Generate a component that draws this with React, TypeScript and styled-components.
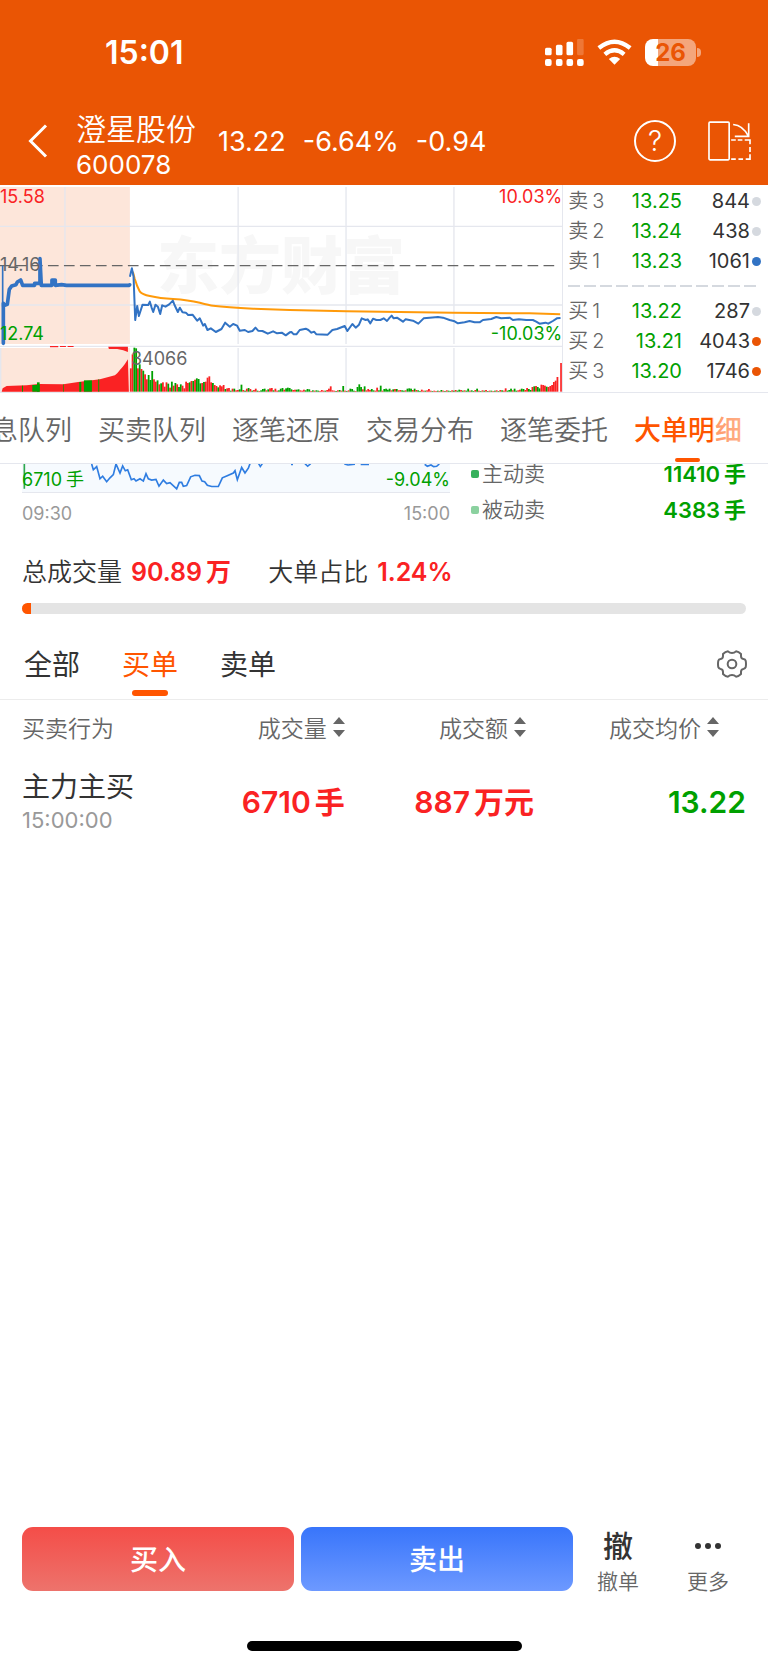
import React from "react";
import styled, { createGlobalStyle } from "styled-components";

const color = {
  brand: "#ea5504",
  accent: "#ff5500",
  up: "#fa2223",
  down: "#00a000",
  ink: "#333333",
  sub: "#666666",
  mute: "#999999",
  line: "#e5e7ee",
};

const GlobalStyle = createGlobalStyle`
  * { box-sizing: border-box; }
  body {
    margin: 0;
    background: #fff;
    color: ${color.ink};
    font-family: Inter, "Noto Sans CJK SC", sans-serif;
  }
  button {
    margin: 0;
    padding: 0;
    border: 0;
    background: none;
    color: inherit;
    font: inherit;
  }
  svg { display: block; }
  table { border-collapse: collapse; border-spacing: 0; }
  th, td { padding: 0; font-weight: 400; }
`;

const Page = styled.div`
  display: flex;
  flex-direction: column;
  min-height: 100vh;
  overflow: hidden;
`;

const Unit = styled.span`
  margin-left: 4px;
`;

/* ---------- header ---------- */

const Header = styled.header`
  background: ${color.brand};
  color: #fff;
  padding-bottom: 3px;
`;

const StatusBar = styled.div`
  display: flex;
  align-items: center;
  justify-content: space-between;
  height: 100px;
  padding: 4px 67px 0 105px;
`;

const Clock = styled.span`
  font-size: 32px;
  font-weight: 600;
`;

const StatusIcons = styled.div`
  display: flex;
  align-items: center;
  gap: 13px;
`;

const BatteryGroup = styled.div`
  display: flex;
  align-items: center;
  gap: 1px;
`;

const Battery = styled.span`
  width: 51px;
  height: 27px;
  border-radius: 8px;
  background: linear-gradient(90deg, #fff 13px, rgba(255, 255, 255, 0.48) 13px);
  color: ${color.brand};
  font-size: 24px;
  font-weight: 700;
  line-height: 27px;
  text-align: center;
`;

const BatteryTip = styled.span`
  width: 4px;
  height: 9px;
  border-radius: 0 4px 4px 0;
  background: rgba(255, 255, 255, 0.48);
`;

const NavBar = styled.div`
  display: flex;
  align-items: center;
  height: 82px;
  padding: 0 17px 0 28px;
`;

const BackButton = styled.button`
  width: 48px;
`;

const StockTitle = styled.div`
  padding-top: 12px;
`;

const StockName = styled.h1`
  margin: 0;
  font-size: 30px;
  font-weight: 350;
  line-height: 36px;
`;

const StockCode = styled.div`
  font-size: 26px;
  line-height: 36px;
`;

const Quote = styled.div`
  display: flex;
  flex: 1;
  gap: 17px;
  padding: 2px 0 0 22px;
  font-size: 27px;
  line-height: 36px;
`;

const HelpButton = styled.button`
  width: 42px;
  height: 42px;
  margin-right: 32px;
  border: 2px solid #fff;
  border-radius: 50%;
  font-size: 28px;
  font-weight: 300;
  line-height: 38px;
`;

/* ---------- minute chart and order book ---------- */

const Market = styled.section`
  display: grid;
  grid-template-columns: 11fr 4fr;
  border-bottom: 1px solid ${color.line};
`;

const ChartPane = styled.div`
  position: relative;
  height: 207px;
  border-right: 1px solid ${color.line};
  svg { width: 100%; height: 100%; position: relative; }
`;

const Watermark = styled.span`
  position: absolute;
  left: 0;
  right: 0;
  top: 37px;
  text-align: center;
  font-size: 62px;
  font-weight: 900;
  line-height: 90px;
  color: #f7f7f7;
`;

const ChartLabel = styled.span<{ $top: number; $left?: number; $right?: number; $tone: string }>`
  position: absolute;
  top: ${(p) => p.$top}px;
  ${(p) => (p.$right !== undefined ? `right: ${p.$right}px;` : `left: ${p.$left ?? 0}px;`)}
  font-size: 18px;
  line-height: 24px;
  color: ${(p) => p.$tone};
`;

const Book = styled.div`
  padding: 1px 7px 0 5px;
`;

const BookTable = styled.table`
  width: 100%;
  font-size: 20px;
  line-height: 30px;
  td, th { height: 30px; text-align: right; }
`;

const BookSide = styled.th`
  && { text-align: left; }
  font-weight: 350;
  color: ${color.sub};
`;

const BookPrice = styled.td`
  width: 60px;
  color: ${color.down};
`;

const BookVolume = styled.td`
  width: 68px;
`;

const BookDotCell = styled.td`
  width: 11px;
`;

const Dot = styled.i<{ $tone: string }>`
  display: block;
  width: 9px;
  height: 9px;
  margin-left: auto;
  border-radius: 50%;
  background: ${(p) => p.$tone};
`;

const Spread = styled.div`
  display: flex;
  align-items: center;
  height: 20px;
  padding-right: 4px;
  &::before {
    content: "";
    flex: 1;
    height: 2px;
    background: repeating-linear-gradient(90deg, #d5d9df 0 12px, transparent 12px 16px);
  }
`;

/* ---------- section tabs ---------- */

const SectionTabs = styled.nav`
  position: relative;
  display: flex;
  justify-content: flex-end;
  gap: 26px;
  height: 71px;
  padding-right: 26px;
  overflow: hidden;
  border-bottom: 1px solid ${color.line};
  &::after {
    content: "";
    position: absolute;
    inset: 0 0 0 auto;
    width: 56px;
    background: linear-gradient(90deg, rgba(255, 255, 255, 0.4), rgba(255, 255, 255, 0.65));
  }
`;

const SectionTab = styled.button<{ $active?: boolean }>`
  position: relative;
  flex: none;
  font-size: 27px;
  font-weight: ${(p) => (p.$active ? 500 : 350)};
  color: ${(p) => (p.$active ? color.accent : color.sub)};
  &::after {
    content: "";
    display: ${(p) => (p.$active ? "block" : "none")};
    position: absolute;
    left: 50%;
    bottom: 1px;
    width: 25px;
    height: 4px;
    margin-left: -13px;
    border-radius: 2px;
    background: ${color.accent};
  }
`;

/* ---------- big-order summary ---------- */

const Summary = styled.section`
  display: grid;
  grid-template-columns: 428fr 296fr;
  padding: 0 22px;
  overflow: hidden;
`;

const FlowChart = styled.div`
  position: relative;
  height: 29px;
  border-bottom: 1px solid ${color.line};
  background: #f6fafe;
  svg { width: 100%; height: 28px; }
`;

const TimeAxis = styled.div`
  display: flex;
  justify-content: space-between;
  font-size: 18px;
  line-height: 42px;
  color: ${color.mute};
`;

const Legend = styled.ul`
  margin: -8px 0 0;
  padding: 0 0 0 21px;
  list-style: none;
`;

const LegendRow = styled.li`
  display: flex;
  align-items: center;
  height: 36px;
  font-size: 21px;
  font-weight: 350;
  line-height: 30px;
  color: ${color.sub};
`;

const LegendMark = styled.i<{ $tone: string }>`
  width: 8px;
  height: 8px;
  margin-right: 3px;
  border-radius: 2px;
  background: ${(p) => p.$tone};
`;

const LegendValue = styled.strong`
  margin-left: auto;
  font-size: 22px;
  font-weight: 600;
  color: ${color.down};
`;

const Totals = styled.div`
  display: flex;
  gap: 37px;
  margin-top: 19px;
  padding: 0 22px;
  font-size: 25px;
  font-weight: 350;
  line-height: 36px;
`;

const Total = styled.span`
  display: flex;
  gap: 9px;
`;

const TotalValue = styled.strong`
  font-weight: 600;
  color: ${color.up};
`;

const Ratio = styled.div`
  height: 11px;
  margin: 13px 22px 15px;
  border-radius: 6px;
  overflow: hidden;
  background: #e4e4e4;
`;

const RatioFill = styled.div`
  width: 9px;
  height: 100%;
  background: ${color.accent};
`;

/* ---------- order list ---------- */

const Filters = styled.div`
  display: flex;
  align-items: stretch;
  gap: 42px;
  height: 71px;
  padding: 0 21px 0 24px;
  border-bottom: 1px solid #ececec;
`;

const Filter = styled.button<{ $active?: boolean }>`
  position: relative;
  padding-bottom: 3px;
  font-size: 28px;
  color: ${(p) => (p.$active ? color.accent : color.ink)};
  &::after {
    content: "";
    display: ${(p) => (p.$active ? "block" : "none")};
    position: absolute;
    left: 10px;
    right: 10px;
    bottom: 3px;
    height: 6px;
    border-radius: 3px;
    background: ${color.accent};
  }
`;

const SettingsButton = styled.button`
  margin-left: auto;
`;

const Orders = styled.table`
  width: calc(100% - 44px);
  margin: 0 22px;
  table-layout: fixed;
`;

const HeadCell = styled.th<{ $width: string; $inset?: number }>`
  width: ${(p) => p.$width};
  height: 57px;
  padding: 0 ${(p) => p.$inset ?? 0}px 4px 0;
  font-size: 23px;
  font-weight: 350;
  text-align: right;
  color: ${color.sub};
  &:first-child { text-align: left; }
`;

const SortButton = styled.button`
  display: inline-flex;
  align-items: center;
  gap: 6px;
  vertical-align: middle;
`;

const ActionCell = styled.td`
  height: 90px;
  white-space: nowrap;
`;

const Action = styled.div`
  font-size: 28px;
  line-height: 36px;
`;

const Time = styled.div`
  font-size: 22px;
  line-height: 30px;
  color: ${color.mute};
`;

const ValueCell = styled.td<{ $tone: string; $inset?: number }>`
  padding-right: ${(p) => p.$inset ?? 0}px;
  font-size: 30px;
  font-weight: 600;
  line-height: 36px;
  text-align: right;
  white-space: nowrap;
  color: ${(p) => p.$tone};
`;

/* ---------- bottom bar ---------- */

const Footer = styled.footer`
  margin-top: auto;
`;

const TradeBar = styled.div`
  display: flex;
  align-items: flex-start;
  padding: 0 15px 0 22px;
`;

const TradeButton = styled.button<{ $from: string; $to: string }>`
  flex: 1;
  height: 64px;
  padding-bottom: 2px;
  border-radius: 11px;
  background: linear-gradient(${(p) => p.$from}, ${(p) => p.$to});
  color: #fff;
  font-size: 28px;
  font-weight: 500;
  & + & { margin-left: 7px; }
`;

const ToolButton = styled.button`
  display: flex;
  flex-direction: column;
  align-items: center;
  width: 90px;
  font-size: 21px;
  font-weight: 350;
  line-height: 34px;
  color: ${color.sub};
`;

const ToolGlyph = styled.span`
  display: flex;
  align-items: center;
  height: 38px;
  font-size: 30px;
  font-weight: 500;
  color: ${color.ink};
`;

const HomeIndicator = styled.div`
  width: 275px;
  height: 10px;
  margin: 42px auto 14px;
  border-radius: 5px;
  background: #000;
`;

/* ---------- data ---------- */

const auctionLine =
  "10,490 10,370 14,376 22,373 28,328 35,318 48,314 52,306 62,300 68,316 104,316 104,310 120,310 120,236 124,316 156,316 156,300 166,300 166,316 185,314 200,316 388,316";

const priceLine =
  "390,290 396,265 401,290 406,420 412,378 417,408 428,374 445,375 450,365 455,382 460,396 467,374 474,380 481,402 487,376 497,380 508,373 519,362 524,375 534,396 540,383 548,397 558,398 565,405 578,404 592,422 600,415 610,437 615,432 623,450 633,445 648,456 665,447 676,428 690,440 700,432 712,437 720,452 735,450 745,456 758,453 767,443 775,452 788,453 804,461 820,454 832,460 846,458 858,466 870,457 875,456 882,463 890,463 900,450 918,446 926,450 935,458 943,455 950,463 984,464 998,450 1012,447 1035,438 1043,453 1058,432 1068,443 1078,434 1086,415 1098,420 1104,418 1112,430 1120,416 1130,420 1142,420 1152,415 1162,423 1170,413 1176,407 1182,415 1192,413 1210,425 1218,418 1240,422 1256,431 1272,415 1290,413 1315,411 1330,413 1350,420 1365,424 1375,430 1395,427 1410,423 1425,427 1440,427 1450,420 1475,417 1490,411 1505,415 1530,413 1540,420 1558,418 1580,420 1600,420 1610,425 1620,431 1638,428 1646,431 1660,423 1672,415 1683,414";

const averageLine =
  "M399 275L404 295L412 318L420 335Q427 344 450 348Q480 355 520 357Q565 360 600 368Q630 376 640 377Q680 381 760 386L870 390L1040 394L1360 398L1590 400L1682 403";

const auctionVolume =
  "5,635 8,625 20,618 80,616 115,612 190,613 235,606 300,598 345,586 352,580 360,570 368,561 375,552 384,538 387,635";

const auctionSell: Array<[number, number, number]> = [
  [66, 3, 18], [97, 22, 20], [111, 8, 28], [190, 2, 22], [238, 6, 29], [252, 24, 34], [295, 3, 37],
];

/* one entry per minute: r = rise, g = fall, followed by the bar height */
const volumes = (
  "r70 r112 g132 g130 r70 g82 r68 g63 r52 r37 g50 g35 g62 r37 r30 g34 r22 g25 r28 r15 r28 g24 r12 g30 r18 g26 r22 g14 g22 r18 r10 r30 r26 g28 r32 g32 r36 g40 g38 g25 r26 g29 r30 r42 r46 r28 g26 r20 r17 g13 r19 r16 r20 g8 r10 r11 g3 r9 g9 r4 r5 g7 g21 r5 g3 r9 g11 r8 g3 r5 r9 g3 r2 g4 g8 g9 r4 g7 r10 r11 g4 r9 r3 g4 g9 g11 r6 " +
  "g10 g12 g11 g7 r5 r6 g6 g7 r4 r3 r6 g4 g8 g7 r2 g4 r3 g4 g3 r2 r5 r3 g3 r5 r9 r16 r4 r3 g2 r4 g5 r3 g17 r3 g2 r4 g9 g8 g3 r2 g14 g22 g14 r7 g16 r4 r8 r5 g8 g4 r3 r12 g4 g18 r3 g8 g9 g6 g9 r4 g7 r8 g8 r4 r5 g4 g3 r4 g9 g10 g9 r5 g9 r5 g4 g2 r6 r3 g3 r4 r8 r3 g2 r3 " +
  "r2 g3 r2 g5 r3 g2 r4 g3 g2 r4 g3 r5 g3 g6 r5 g3 r4 g3 g9 r3 g4 g2 r5 g9 r3 g2 r4 g3 r5 g2 r3 g3 r2 g3 r4 g2 r5 g4 r3 r10 g3 g5 g9 r4 g9 g3 r4 r6 g9 g8 r5 r11 g8 g5 r14 g16 r17 g14 g10 r21 r20 r18 g15 r14 r17 r20 r29 r33 r44"
).split(" ");

const flowLine =
  "275,207 280,225 290,215 300,253 308,245 320,262 330,250 340,240 348,207 360,235 368,213 376,228 383,225 394,256 402,253 408,260 420,253 430,260 438,237 445,253 455,257 468,255 477,276 490,257 500,268 510,265 530,284 538,264 545,264 550,276 560,274 572,247 585,242 598,243 606,260 614,262 622,273 635,277 655,277 667,250 680,244 700,235 705,228 712,256 725,218 735,235 745,220 750,206";

const gray = "#d5d9df";
const asks = [
  { side: "卖", level: 3, price: "13.25", volume: 844, dot: gray },
  { side: "卖", level: 2, price: "13.24", volume: 438, dot: gray },
  { side: "卖", level: 1, price: "13.23", volume: 1061, dot: "#3273c4" },
];
const bids = [
  { side: "买", level: 1, price: "13.22", volume: 287, dot: gray },
  { side: "买", level: 2, price: "13.21", volume: 4043, dot: color.brand },
  { side: "买", level: 3, price: "13.20", volume: 1746, dot: color.brand },
];

const sections = ["信息队列", "买卖队列", "逐笔还原", "交易分布", "逐笔委托", "大单明细"];

/* ---------- drawings ---------- */

const SignalIcon = () => (
  <svg width="39" height="27" viewBox="483 114 118 81" fill="#fff" aria-hidden="true">
    {[483, 516, 548, 580].map((x, i) => (
      <React.Fragment key={x}>
        <rect x={x} y="174" width="20" height="21" rx="6" />
        <rect x={x} y={140 - i * 9} width="20" height={23 + i * 9} rx="5" opacity={i === 3 ? 0.2 : 1} />
      </React.Fragment>
    ))}
  </svg>
);

const WifiIcon = () => (
  <svg width="35" height="26" viewBox="640 115 104 78" fill="none" stroke="#fff" strokeWidth="13" aria-hidden="true">
    <path d="M645 142Q692 104 739 142" />
    <path d="M663 161Q692 137 721 161" />
    <path d="M692 192L675 175Q692 162 709 175Z" fill="#fff" stroke="none" />
  </svg>
);

const BackIcon = () => (
  <svg width="20" height="34" viewBox="0 0 20 34" fill="none" stroke="#fff" strokeWidth="3" aria-hidden="true">
    <path d="M18 1.500L2.500 17L18 32.500" />
  </svg>
);

const RotateIcon = () => (
  <svg width="43" height="40" viewBox="972 363 130 120" fill="none" stroke="#fff" strokeWidth="5" aria-hidden="true">
    <rect x="975" y="366" width="61" height="114" rx="3" />
    <path d="M1048 373Q1078 376 1093 407M1095 369V409H1053" />
    <path d="M1042 420H1056M1062 420H1076M1083 420H1099V433M1099 441V456M1099 463V478H1086M1078 478H1064M1056 478H1042" />
  </svg>
);

const GearIcon = () => (
  <svg width="30" height="28" viewBox="0 0 90 84" fill="none" stroke="#666" strokeWidth="6" strokeLinejoin="round" aria-hidden="true">
    <path d="M33 4Q38 9 45 9Q52 9 57 4Q65 5 72 12V18Q72 26 79 27Q85 28 86 32Q88 42 86 52Q85 56 79 57Q72 58 72 66V72Q65 79 57 80Q52 75 45 75Q38 75 33 80Q25 79 18 72V66Q18 58 11 57Q5 56 4 52Q2 42 4 32Q5 28 11 27Q18 26 18 18V12Q25 5 33 4Z" />
    <circle cx="45" cy="42" r="13" />
  </svg>
);

const SortIcon = () => (
  <svg width="12" height="20" viewBox="0 0 12 20" fill="#666" aria-hidden="true">
    <path d="M6 0L12 7H0ZM6 20L12 13H0Z" />
  </svg>
);

const MoreIcon = () => (
  <svg width="26" height="6" viewBox="0 0 26 6" fill="#333" aria-hidden="true">
    <circle cx="3" cy="3" r="3" />
    <circle cx="13" cy="3" r="3" />
    <circle cx="23" cy="3" r="3" />
  </svg>
);

const MinuteChart = () => (
  <svg viewBox="0 15 1688 621" preserveAspectRatio="none" fill="none" role="img" aria-label="分时图">
    <rect x="0" y="21" width="390" height="471" fill="#fde6da" />
    <rect x="0" y="504" width="390" height="131" fill="#fde6da" />
    <g stroke={color.line} strokeWidth="4">
      <path d="M195 21V492M715 21V492M1039 21V492M1363 21V492M715 504V635M1039 504V635M1363 504V635" />
      <path d="M0 139H1688M0 375H1688M0 499H1688M2 504V635" />
    </g>
    <path d="M0 257H1680" stroke="#666" strokeWidth="4" strokeDasharray="32 16" />
    <polygon points={auctionVolume} fill={color.up} />
    <path d="M325 500H384V516L370 511L352 507H327ZM150 498H175V502H150ZM180 498H198V501H180ZM203 498H221V501H203Z" fill={color.up} />
    {auctionSell.map(([x, w, h]) => (
      <rect key={x} x={x} y={635 - h} width={w} height={h} fill={color.down} />
    ))}
    {volumes.map((v, i) => (
      <rect
        key={i}
        x={390 + i * 5.36}
        y={635 - Number(v.slice(1))}
        width="5.4"
        height={Number(v.slice(1))}
        fill={v[0] === "r" ? color.up : color.down}
      />
    ))}
    <rect x="1682" y="549" width="5" height="86" fill={color.up} />
    <path d={averageLine} stroke="#ff9a0a" strokeWidth="6" />
    <path d="M8 257V380" stroke="#3273c4" strokeWidth="5" />
    <polyline points={auctionLine} stroke="#3273c4" strokeWidth="11" strokeLinejoin="round" strokeLinecap="round" />
    <polyline points={priceLine} stroke="#3273c4" strokeWidth="6" strokeLinejoin="round" />
    <circle cx="390" cy="314" r="5" fill="#3273c4" />
  </svg>
);

const FlowSvg = () => (
  <svg viewBox="66 207 1284 87" preserveAspectRatio="none" fill="none" stroke="#2f7de1" strokeWidth="5" role="img" aria-label="大单走势">
    <path d="M73 207V284" stroke="#2fa84f" />
    <polyline points={flowLine} />
    <path d="M776 206L781 215L787 206M873 208H879M915 206L923 214L932 206M1033 207L1044 210L1065 208M1082 208H1107M1274 208L1282 214L1293 210L1301 215L1310 214L1318 207" />
  </svg>
);

/* ---------- parts ---------- */

type Level = { side: string; level: number; price: string; volume: number; dot: string };

const Levels = ({ rows }: { rows: Level[] }) => (
  <BookTable>
    <tbody>
      {rows.map((r) => (
        <tr key={r.level}>
          <BookSide scope="row">
            {r.side}
            <Unit>{r.level}</Unit>
          </BookSide>
          <BookPrice>{r.price}</BookPrice>
          <BookVolume>{r.volume}</BookVolume>
          <BookDotCell>
            <Dot $tone={r.dot} />
          </BookDotCell>
        </tr>
      ))}
    </tbody>
  </BookTable>
);

const SortHead = ({ label, width, inset }: { label: string; width: string; inset: number }) => (
  <HeadCell scope="col" $width={width} $inset={inset}>
    <SortButton>
      {label}
      <SortIcon />
    </SortButton>
  </HeadCell>
);

export default function App() {
  return (
    <Page>
      <GlobalStyle />
      <Header>
        <StatusBar>
          <Clock>15:01</Clock>
          <StatusIcons>
            <SignalIcon />
            <WifiIcon />
            <BatteryGroup>
              <Battery>26</Battery>
              <BatteryTip />
            </BatteryGroup>
          </StatusIcons>
        </StatusBar>
        <NavBar>
          <BackButton aria-label="返回">
            <BackIcon />
          </BackButton>
          <StockTitle>
            <StockName>澄星股份</StockName>
            <StockCode>600078</StockCode>
          </StockTitle>
          <Quote>
            <span>13.22</span>
            <span>-6.64%</span>
            <span>-0.94</span>
          </Quote>
          <HelpButton aria-label="帮助">?</HelpButton>
          <button aria-label="横屏">
            <RotateIcon />
          </button>
        </NavBar>
      </Header>

      <Market>
        <ChartPane>
          <Watermark>东方财富</Watermark>
          <MinuteChart />
          <ChartLabel $top={0} $tone={color.up}>15.58</ChartLabel>
          <ChartLabel $top={68} $tone={color.sub}>14.16</ChartLabel>
          <ChartLabel $top={137} $tone={color.down}>12.74</ChartLabel>
          <ChartLabel $top={0} $right={0} $tone={color.up}>10.03%</ChartLabel>
          <ChartLabel $top={137} $right={0} $tone={color.down}>-10.03%</ChartLabel>
          <ChartLabel $top={162} $left={131} $tone={color.sub}>34066</ChartLabel>
        </ChartPane>
        <Book>
          <Levels rows={asks} />
          <Spread />
          <Levels rows={bids} />
        </Book>
      </Market>

      <SectionTabs>
        {sections.map((name) => (
          <SectionTab key={name} $active={name === "大单明细"}>
            {name}
          </SectionTab>
        ))}
      </SectionTabs>

      <Summary>
        <div>
          <FlowChart>
            <FlowSvg />
            <ChartLabel $top={4} $tone={color.down}>
              6710<Unit>手</Unit>
            </ChartLabel>
            <ChartLabel $top={4} $right={0} $tone={color.down}>-9.04%</ChartLabel>
          </FlowChart>
          <TimeAxis>
            <span>09:30</span>
            <span>15:00</span>
          </TimeAxis>
        </div>
        <Legend>
          <LegendRow>
            <LegendMark $tone="#37b15c" />
            主动卖
            <LegendValue>
              11410<Unit>手</Unit>
            </LegendValue>
          </LegendRow>
          <LegendRow>
            <LegendMark $tone="#8bd19f" />
            被动卖
            <LegendValue>
              4383<Unit>手</Unit>
            </LegendValue>
          </LegendRow>
        </Legend>
      </Summary>

      <Totals>
        <Total>
          总成交量
          <TotalValue>
            90.89<Unit>万</Unit>
          </TotalValue>
        </Total>
        <Total>
          大单占比
          <TotalValue>1.24%</TotalValue>
        </Total>
      </Totals>
      <Ratio role="progressbar" aria-label="大单占比" aria-valuenow={1.24}>
        <RatioFill />
      </Ratio>

      <Filters>
        <Filter>全部</Filter>
        <Filter $active>买单</Filter>
        <Filter>卖单</Filter>
        <SettingsButton aria-label="设置">
          <GearIcon />
        </SettingsButton>
      </Filters>

      <Orders>
        <thead>
          <tr>
            <HeadCell scope="col" $width="22%">买卖行为</HeadCell>
            <SortHead label="成交量" width="23%" inset={3} />
            <SortHead label="成交额" width="26%" inset={10} />
            <SortHead label="成交均价" width="29%" inset={27} />
          </tr>
        </thead>
        <tbody>
          <tr>
            <ActionCell>
              <Action>主力主买</Action>
              <Time>15:00:00</Time>
            </ActionCell>
            <ValueCell $tone={color.up} $inset={3}>
              6710<Unit>手</Unit>
            </ValueCell>
            <ValueCell $tone={color.up} $inset={2}>
              887<Unit>万元</Unit>
            </ValueCell>
            <ValueCell $tone={color.down}>13.22</ValueCell>
          </tr>
        </tbody>
      </Orders>

      <Footer>
        <TradeBar>
          <TradeButton $from="#f44d48" $to="#ed736c">买入</TradeButton>
          <TradeButton $from="#3875fb" $to="#6d99ff">卖出</TradeButton>
          <ToolButton>
            <ToolGlyph>撤</ToolGlyph>
            撤单
          </ToolButton>
          <ToolButton>
            <ToolGlyph>
              <MoreIcon />
            </ToolGlyph>
            更多
          </ToolButton>
        </TradeBar>
        <HomeIndicator />
      </Footer>
    </Page>
  );
}
